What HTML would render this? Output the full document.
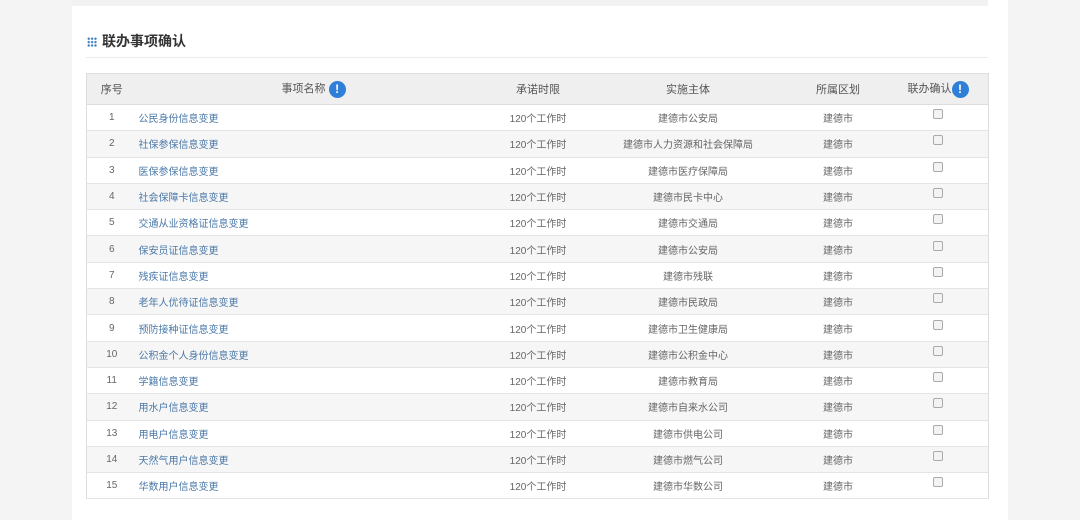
<!DOCTYPE html><html><head><meta charset="utf-8"><style>
body{margin:0;width:1080px;height:520px;background:#f4f4f4;font-family:"Liberation Sans","Noto Sans CJK SC",sans-serif;overflow:hidden;position:relative}
.panel{position:absolute;left:72px;top:0;width:936px;height:520px;background:#fff}
.topband{position:absolute;left:72px;top:0;width:916px;height:6px;background:#f2f2f2}
.title{position:absolute;left:87px;top:31px;font-size:14px;font-weight:bold;color:#333}
.title i{display:inline-block;width:10px;height:10px;margin-right:5px;vertical-align:-1px;background:radial-gradient(circle,#3a7cc0 1px,transparent 1.3px) 0 0/3.4px 3.4px}
.sep{position:absolute;left:86px;top:57px;width:902px;height:1px;background:#ececec}
table{position:absolute;left:86px;top:73px;width:902px;border-collapse:collapse;table-layout:fixed;font-size:10px;color:#666;border:1px solid #ddd;white-space:nowrap}
th{height:30px;padding:0;background:#efefef;font-weight:normal;font-size:11px;color:#555;border-bottom:1px solid #ddd}
td{height:25.3px;border-bottom:1px solid #e4e4e4;text-align:center;padding:0}
tr:nth-child(odd) td{background:#f6f6f6}
td.n{text-align:left;color:#4a78a8;padding-left:2px}
.ic{display:inline-block;width:17px;height:17px;border-radius:50%;background:#2f7fd8;color:#fff;font-weight:bold;font-size:12px;line-height:17px;text-align:center;vertical-align:middle}
.cb{display:inline-block;width:8px;height:8px;border:1px solid #aaa;border-radius:2px;background:#f3f3f3;vertical-align:4px}
td.c{text-align:left;padding-left:27px}
</style></head><body>
<div class="panel"></div><div class="topband"></div>
<div class="title"><i></i>联办事项确认</div><div class="sep"></div>
<table>
<colgroup><col style="width:50px"><col style="width:334px"><col style="width:135px"><col style="width:165px"><col style="width:135px"><col style="width:83px"></colgroup>
<tr><th>序号</th><th style="text-align:left;padding-left:145px">事项名称 <span class="ic">!</span></th><th>承诺时限</th><th>实施主体</th><th>所属区划</th><th style="text-align:left;padding-left:2px">联办确认<span class="ic">!</span></th></tr>
<tr><td>1</td><td class="n">公民身份信息变更</td><td>120个工作时</td><td>建德市公安局</td><td>建德市</td><td class="c"><span class="cb"></span></td></tr>
<tr><td>2</td><td class="n">社保参保信息变更</td><td>120个工作时</td><td>建德市人力资源和社会保障局</td><td>建德市</td><td class="c"><span class="cb"></span></td></tr>
<tr><td>3</td><td class="n">医保参保信息变更</td><td>120个工作时</td><td>建德市医疗保障局</td><td>建德市</td><td class="c"><span class="cb"></span></td></tr>
<tr><td>4</td><td class="n">社会保障卡信息变更</td><td>120个工作时</td><td>建德市民卡中心</td><td>建德市</td><td class="c"><span class="cb"></span></td></tr>
<tr><td>5</td><td class="n">交通从业资格证信息变更</td><td>120个工作时</td><td>建德市交通局</td><td>建德市</td><td class="c"><span class="cb"></span></td></tr>
<tr><td>6</td><td class="n">保安员证信息变更</td><td>120个工作时</td><td>建德市公安局</td><td>建德市</td><td class="c"><span class="cb"></span></td></tr>
<tr><td>7</td><td class="n">残疾证信息变更</td><td>120个工作时</td><td>建德市残联</td><td>建德市</td><td class="c"><span class="cb"></span></td></tr>
<tr><td>8</td><td class="n">老年人优待证信息变更</td><td>120个工作时</td><td>建德市民政局</td><td>建德市</td><td class="c"><span class="cb"></span></td></tr>
<tr><td>9</td><td class="n">预防接种证信息变更</td><td>120个工作时</td><td>建德市卫生健康局</td><td>建德市</td><td class="c"><span class="cb"></span></td></tr>
<tr><td>10</td><td class="n">公积金个人身份信息变更</td><td>120个工作时</td><td>建德市公积金中心</td><td>建德市</td><td class="c"><span class="cb"></span></td></tr>
<tr><td>11</td><td class="n">学籍信息变更</td><td>120个工作时</td><td>建德市教育局</td><td>建德市</td><td class="c"><span class="cb"></span></td></tr>
<tr><td>12</td><td class="n">用水户信息变更</td><td>120个工作时</td><td>建德市自来水公司</td><td>建德市</td><td class="c"><span class="cb"></span></td></tr>
<tr><td>13</td><td class="n">用电户信息变更</td><td>120个工作时</td><td>建德市供电公司</td><td>建德市</td><td class="c"><span class="cb"></span></td></tr>
<tr><td>14</td><td class="n">天然气用户信息变更</td><td>120个工作时</td><td>建德市燃气公司</td><td>建德市</td><td class="c"><span class="cb"></span></td></tr>
<tr><td>15</td><td class="n">华数用户信息变更</td><td>120个工作时</td><td>建德市华数公司</td><td>建德市</td><td class="c"><span class="cb"></span></td></tr>
</table>
</body></html>
